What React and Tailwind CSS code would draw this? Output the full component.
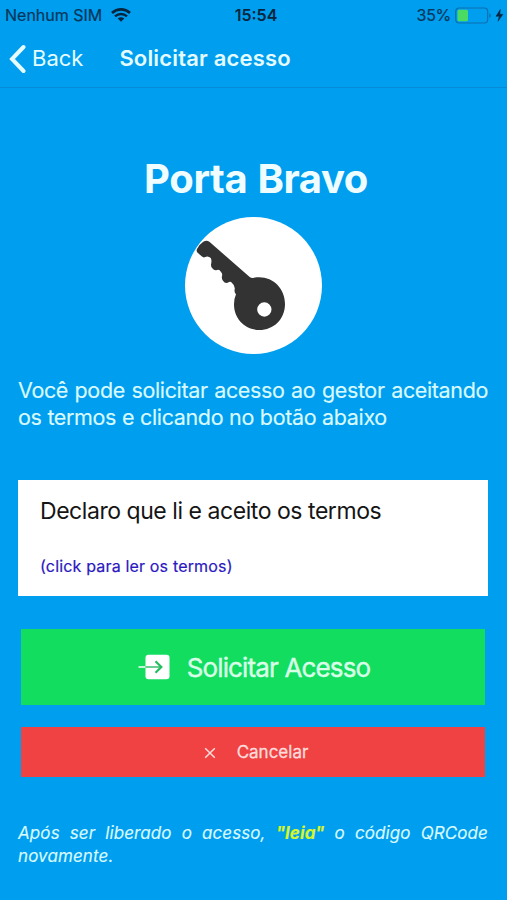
function WifiIcon() {
  return (
    <svg width="20" height="14" viewBox="0 0 20 14" fill="none" stroke="#06263f">
      <path d="M1 4.9C6.2 0.3 13.8 0.3 19 4.9" strokeWidth="2.7" />
      <path d="M4 8.3C7.5 5.1 12.5 5.1 16 8.3" strokeWidth="2.5" />
      <path d="M10 13.8L6.7 10.6C8.7 8.9 11.3 8.9 13.3 10.6Z" fill="#06263f" stroke="none" />
    </svg>
  );
}

function BatteryIcon() {
  return (
    <svg width="50" height="17" viewBox="0 0 50 17" fill="none">
      <rect x="0.7" y="1" width="32" height="15" rx="3.5" stroke="#0b6fae" strokeWidth="1.2" />
      <rect x="2.5" y="2.8" width="10.5" height="11.4" rx="1.5" fill="#4cdb62" />
      <path d="M34.3 6.2C36.5 7 36.5 10 34.3 10.8Z" fill="#0b6fae" />
      <path d="M45.3 2.5L41 9.3H44.3L43 14.3L47.9 7.3H44.8Z" fill="#06263f" stroke="#06263f" strokeWidth="0.5" />
    </svg>
  );
}

function KeyIcon() {
  return (
    <svg width="137" height="137" viewBox="0 0 411 411">
      <path
        fill="#333333"
        fillRule="evenodd"
        d="M60 72Q67 70 74 75L195 181Q201 184 207 182C259 173 300 211 300 261C300 307 266 339 223 339C180 339 147 306 147 262Q147 245 153 232Q147 226 149 217Q151 206 141 198Q137 192 132 195Q121 202 114 191Q109 186 111 177Q113 170 108 165Q103 156 96 159Q88 162 82 154Q76 149 79 137Q81 122 72 120Q67 117 59 121Q54 122 50 118L38 107Q33 102 36 96Q41 84 53 76Q56 73 60 72ZM238 256A21.5 21.5 0 1 0 238 299A21.5 21.5 0 1 0 238 256Z"
      />
    </svg>
  );
}

function EnterIcon() {
  return (
    <svg width="32" height="26" viewBox="0 0 32 26" fill="none">
      <rect x="7.5" y="0.7" width="24" height="24.5" rx="3" fill="white" />
      <path d="M0.5 13H7.5" stroke="#c4f7d5" strokeWidth="2" />
      <path d="M7.5 13H22" stroke="#58c985" strokeWidth="1.8" />
      <path d="M17.5 7.3L23.3 13L17.5 18.7" stroke="#24bd60" strokeWidth="2.2" />
    </svg>
  );
}

function StatusBar() {
  return (
    <div className="grid h-[30px] grid-cols-3 items-center pl-[5px] text-[16px] text-[#06365a]">
      <div className="flex items-center gap-[9px] whitespace-nowrap [-webkit-text-stroke:0.2px]">
        <span>Nenhum SIM</span>
        <WifiIcon />
      </div>
      <span className="text-center font-semibold text-[#06263f]">15:54</span>
      <div className="flex items-center justify-end gap-[4px] pr-[2px] [-webkit-text-stroke:0.2px]">
        <span className="tracking-[-0.3px]">35%</span>
        <BatteryIcon />
      </div>
    </div>
  );
}

function NavBar() {
  return (
    <header className="flex h-[58px] items-center border-b border-[#078bd8] pl-[9px] text-[#e4fcff]">
      <button className="flex items-center gap-[6px] text-[22px]">
        <svg
          width="17"
          height="30"
          viewBox="0 0 17 30"
          fill="none"
          stroke="currentColor"
          strokeWidth="4"
          strokeLinecap="round"
        >
          <path d="M14.5 3L3 15L14.5 27" />
        </svg>
        Back
      </button>
      <h1 className="ml-9 text-[22px] font-semibold tracking-[0.17px]">Solicitar acesso</h1>
    </header>
  );
}

export default function App() {
  return (
    <div className="h-[900px] w-[507px] overflow-hidden bg-[#009eef] font-['Inter',sans-serif]">
      <StatusBar />
      <NavBar />

      <main className="pr-[19px] pl-[18px] text-[#d8faff]">
        <h2 className="mt-[67px] pl-[6px] text-center text-[40px] leading-[48px] font-bold tracking-[-0.4px] text-[#f0fdff] [word-spacing:1px]">
          Porta Bravo
        </h2>

        <div className="mx-auto mt-[14px] h-[137px] w-[137px] overflow-hidden rounded-full bg-white">
          <KeyIcon />
        </div>

        <p className="mt-[23px] text-justify text-[21.5px] leading-[27px] tracking-[-0.36px] [word-spacing:0.2px] [-webkit-text-stroke:0.15px]">
          Você pode solicitar acesso ao gestor aceitando os termos e clicando no botão abaixo
        </p>

        {/* Terms */}
        <div className="mt-[49px] h-[116px] bg-white pt-[16px] pl-[22px]">
          <p className="text-[23px] leading-[30px] tracking-[-0.45px] text-[#151515]">Declaro que li e aceito os termos</p>
          <a className="mt-[30px] block text-[16px] leading-[20px] tracking-[0.17px] text-[#2b18c0] [-webkit-text-stroke:0.2px]">
            (click para ler os termos)
          </a>
        </div>

        {/* Actions */}
        <div className="mt-[33px] flex flex-col gap-[22px] px-[3px]">
          <button className="flex h-[76px] items-center justify-center gap-[17px] bg-[#12dd5f] pl-[2px] text-[26px] tracking-[-0.85px] text-[#d9ffe8] [-webkit-text-stroke:0.4px]">
            <EnterIcon />
            Solicitar Acesso
          </button>
          <button className="flex h-[50px] items-center justify-center gap-[21px] bg-[#f04242] pt-px pl-[6px] text-[17px] text-[#ffdcdc] [-webkit-text-stroke:0.3px]">
            <svg width="12" height="12" viewBox="0 0 12 12" stroke="currentColor" strokeWidth="1.5">
              <path d="M1.2 1.2L10.8 10.8M10.8 1.2L1.2 10.8" />
            </svg>
            Cancelar
          </button>
        </div>

        <p className="mt-[45px] text-justify text-[17px] leading-[23px] tracking-[0.1px] italic [-webkit-text-stroke:0.15px]">
          Após ser liberado o acesso, <b className="text-[#d5f52c]">"leia"</b> o código QRCode novamente.
        </p>
      </main>
    </div>
  );
}
